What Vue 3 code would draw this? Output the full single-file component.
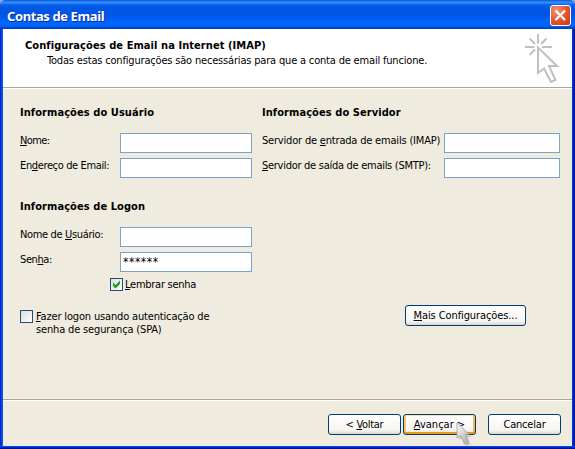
<script setup>
import { ref } from 'vue'

const name = ref('')
const email = ref('')
const user = ref('')
const password = ref('******')
const incoming = ref('')
const outgoing = ref('')
const remember = ref(true)
const spa = ref(false)
</script>

<template>
  <main class="window">
    <header class="titlebar">
      <h1>Contas de Email</h1>
      <button class="close" aria-label="Fechar">
        <svg width="21" height="21" viewBox="0 0 21 21">
          <path d="M5.500 5.500 L15 15 M15 5.500 L5.500 15" stroke="#fff" stroke-width="2.2" />
        </svg>
      </button>
    </header>

    <section class="banner">
      <div class="banner-text">
        <h2>Configurações de Email na Internet (IMAP)</h2>
        <p class="t-sub">Todas estas configurações são necessárias para que a conta de email funcione.</p>
      </div>
      <svg class="banner-icon" width="36" height="52" viewBox="0 0 36 52" fill="none" stroke="#c0c0c0" stroke-width="2">
        <path d="M13 1V10.500 M0 14H9.500 M17 14H27 M4.500 5.500L10 11 M21.500 5.500L16 11 M4.500 22L10 16.500" />
        <path d="M13 14.500V40L19 35.500L26 49L30.500 47L24 33H32Z" />
      </svg>
    </section>

    <section class="content">
      <div class="column left">
        <h3>Informações do Usuário</h3>
        <label class="row"><span class="t-name"><u>N</u>ome:</span><input v-model="name" /></label>
        <label class="row"><span class="t-email">En<u>d</u>ereço de Email:</span><input v-model="email" /></label>
        <h3 class="second">Informações de Logon</h3>
        <label class="row"><span class="t-username">Nome de <u>U</u>suário:</span><input v-model="user" /></label>
        <label class="row"><span class="t-pass">Sen<u>h</u>a:</span><input v-model="password" class="secret" /></label>
        <label class="check remember">
          <input v-model="remember" type="checkbox" class="native" />
          <i class="box"><svg v-if="remember" width="11" height="11" viewBox="0 0 11 11"><path d="M2 3.500V7L4.500 9.500L9 5V1.500L4.500 6Z" fill="#21a121" /></svg></i>
          <span class="t-remember"><u>L</u>embrar senha</span>
        </label>
        <label class="check spa">
          <input v-model="spa" type="checkbox" class="native" />
          <i class="box"></i>
          <span class="t-spa"><u>F</u>azer logon usando autenticação de<br />senha de segurança (SPA)</span>
        </label>
      </div>
      <div class="column right">
        <h3>Informações do Servidor</h3>
        <label class="row"><span class="t-imap">Servidor de <u>e</u>ntrada de emails (IMAP)</span><input v-model="incoming" /></label>
        <label class="row"><span class="t-smtp"><u>S</u>ervidor de saída de emails (SMTP):</span><input v-model="outgoing" /></label>
        <button class="btn more"><span class="t-more"><u>M</u>ais Configurações...</span></button>
      </div>
    </section>

    <footer class="footer">
      <button class="btn"><span class="t-back">&lt; <u>V</u>oltar</span></button>
      <button class="btn active"><span><u>A</u>vançar &gt;</span></button>
      <button class="btn cancel"><span class="t-cancel">Cancelar</span></button>
    </footer>

    <svg class="pointer" width="20" height="26" viewBox="0 0 20 26">
      <defs>
        <linearGradient id="pointer-fill" x1="0" y1="0" x2=".7" y2="1"><stop offset="0" stop-color="#fff" /><stop offset="1" stop-color="#b4b4b4" /></linearGradient>
      </defs>
      <path d="M3 3V18L6.500 15L10 24L14.500 22.500L11.500 15H15.500Z" fill="#a8a69e" opacity=".5" />
      <path d="M1 .5V16L4.500 13.500L8.500 22L12.500 20.500L9.500 12.500H13Z" fill="url(#pointer-fill)" stroke="#a0a0a0" stroke-width=".8" />
    </svg>
  </main>
</template>

<style>
body { margin: 0; background: #8ba5dc; overflow: hidden; }
</style>

<style scoped>
* { box-sizing: border-box; }
.window {
  position: relative;
  width: 575px;
  height: 449px;
  padding: 0 3px 3px;
  display: flex;
  flex-direction: column;
  border-radius: 6px 6px 0 0;
  background: linear-gradient(90deg, #0019cf 0, #0831d9 1px, #0855ea 2px, #0855ea 3px, #0042df 572px, #0029c0 573px, #00138c 575px);
  font: 11px/13px "DejaVu Sans Condensed", "DejaVu Sans", sans-serif;
  font-stretch: condensed;
  color: #000;
  overflow: hidden;
}
.window::after {
  content: "";
  position: absolute;
  inset: auto 0 0;
  height: 3px;
  background: linear-gradient(#0848e5 0 1px, #0025c5 1px 2px, #00138c 2px);
}
h1, h2, h3, p { margin: 0; }
h2, h3 { font-size: 11px; line-height: 13px; font-weight: bold; letter-spacing: 0.07px; }
span, h1, h2, h3, p { white-space: nowrap; }
u { text-decoration: underline; text-decoration-thickness: 1px; text-underline-offset: 1px; text-decoration-skip-ink: none; }

.t-sub { letter-spacing: -0.18px; }
.t-name { letter-spacing: -0.6px; }
.t-email { letter-spacing: -0.37px; }
.t-username { letter-spacing: -0.35px; }
.t-pass { letter-spacing: -0.4px; }
.t-remember { letter-spacing: -0.26px; }
.t-spa { letter-spacing: -0.16px; }
.t-imap { letter-spacing: -0.19px; }
.t-smtp { letter-spacing: -0.28px; }
.t-more { letter-spacing: -0.1px; }
.t-back { letter-spacing: -0.3px; }
.t-cancel { letter-spacing: -0.2px; }

.titlebar {
  flex: none;
  height: 29px;
  margin: 0 -3px;
  padding: 0 4px 0 7px;
  display: flex;
  align-items: center;
  justify-content: space-between;
  background: linear-gradient(#0b4fd0 0, #1f76ee 1px, #3a93ff 3px, #0f6bf2 4px, #0058e6 7px, #0054e3 13px, #005cf2 19px, #0066ff 22px, #0066ff 26px, #0050d8 27px, #003cbf 29px);
}
h1 {
  padding-top: 2px;
  font: bold 13px/16px "Noto Sans", sans-serif;
  letter-spacing: -0.4px;
  color: #fff;
  text-shadow: 1px 1px 0 #0a2a90;
}
.close {
  width: 21px;
  height: 21px;
  margin-top: 2px;
  padding: 0;
  border: 1px solid #fff;
  border-radius: 3px;
  background: radial-gradient(circle at 30% 25%, #f09478, #e2532d 55%, #c93a10);
}
.close svg { display: block; margin: -1px; }

.banner {
  flex: none;
  height: 59px;
  padding: 10px 14px 0 22px;
  display: flex;
  justify-content: space-between;
  background: #fff;
  border-bottom: 1px solid #aca899;
}
.banner-icon { margin-top: -6px; margin-right: -3px; }
.banner p { padding: 2px 0 0 22px; }
.content {
  height: 311px;
  display: flex;
  padding: 17px 0 0 17px;
  border-top: 1px solid #fff;
  background: #efebde;
}
.column { display: flex; flex-direction: column; }
.left { width: 242px; }
.right { width: 298px; }
h3 { margin-bottom: 14px; }
.row { display: flex; height: 20px; margin-bottom: 5px; }
.row span { width: 100px; padding-top: 1px; }
.right .row span { width: 182px; }
.row input {
  width: 132px;
  height: 20px;
  padding: 0 2px;
  border: 1px solid #7ba2c7;
  border-radius: 0;
  outline: 0;
  background: #fff;
  font: 11px/18px "DejaVu Sans Condensed", "DejaVu Sans", sans-serif;
}
.right .row input { width: 116px; }
.row .secret { font-size: 12px; letter-spacing: 0.55px; }
.second { margin-top: 17px; }
.check { display: flex; align-items: flex-start; }
.native { display: none; }
.box {
  flex: none;
  width: 13px;
  height: 13px;
  margin-right: 2px;
  border: 1px solid #1c5180;
  background: linear-gradient(135deg, #dcdcd7, #fff);
}
.box svg { display: block; }
.remember { margin: 1px 0 0 90px; }
.spa { margin-top: 19px; }
.spa .box { margin-right: 3px; }
.btn {
  width: 73px;
  height: 21px;
  padding: 0;
  border: 1px solid #003c74;
  border-radius: 3px;
  background: linear-gradient(#fff, #f6f5f0 80%, #dcd7ca);
  font: inherit;
  color: #000;
}
.more { width: 121px; margin: 122px 0 0 143px; }
.active { box-shadow: inset 0 1px #ffe0a0, inset 0 -2px #e89a18, inset 2px 0 #fbc766, inset -2px 0 #f5b64a; }
.footer {
  flex: 1;
  display: flex;
  gap: 2px;
  padding: 14px 0 0 325px;
  border-top: 1px solid #aca899;
  box-shadow: inset 0 1px #fff;
  background: #efebde;
}
.cancel { margin-left: 10px; }
.pointer { position: absolute; left: 456px; top: 422px; }
</style>
